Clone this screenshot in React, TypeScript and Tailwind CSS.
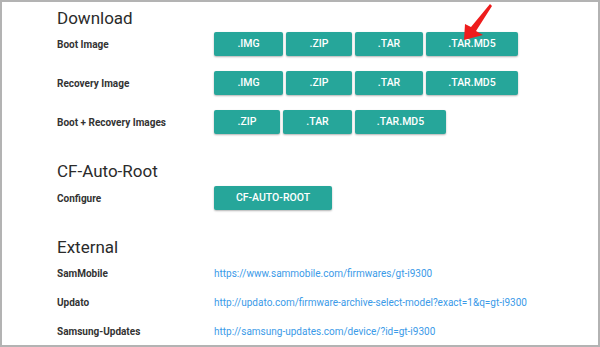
const downloadRows = [
  {
    label: "Boot Image",
    files: [
      { name: ".IMG", w: "w-[69px]" },
      { name: ".ZIP", w: "w-[66px]" },
      { name: ".TAR", w: "w-[68px]" },
      { name: ".TAR.MD5", w: "w-[92px]" },
    ],
  },
  {
    label: "Recovery Image",
    files: [
      { name: ".IMG", w: "w-[69px]" },
      { name: ".ZIP", w: "w-[66px]" },
      { name: ".TAR", w: "w-[68px]" },
      { name: ".TAR.MD5", w: "w-[92px]" },
    ],
  },
  {
    label: "Boot + Recovery Images",
    files: [
      { name: ".ZIP", w: "w-[66px]" },
      { name: ".TAR", w: "w-[69px]" },
      { name: ".TAR.MD5", w: "w-[91px]" },
    ],
  },
];

const externalLinks = [
  { label: "SamMobile", url: "https://www.sammobile.com/firmwares/gt-i9300" },
  { label: "Updato", url: "http://updato.com/firmware-archive-select-model?exact=1&q=gt-i9300" },
  { label: "Samsung-Updates", url: "http://samsung-updates.com/device/?id=gt-i9300" },
];

const Btn = ({ children, w }: { children: React.ReactNode; w: string }) => (
  <button
    className={`${w} h-[24px] rounded-[2px] bg-[#26a69a] text-white text-[10.5px] font-medium uppercase shadow-[0_1px_2px_rgba(0,0,0,0.3)] flex items-center justify-center`}
  >
    {children}
  </button>
);

const Heading = ({ children }: { children: React.ReactNode }) => (
  <h2 className="text-[17px] leading-[24px] font-normal text-[#2b2b2b] pt-[1px]">{children}</h2>
);

const Label = ({ children }: { children: React.ReactNode }) => (
  <div className="w-[157px] shrink-0 text-[10px] font-bold text-[#333]">{children}</div>
);

export default function App() {
  return (
    <div
      className="relative w-[600px] h-[347px] bg-white border-2 border-[#b3b3b3] overflow-hidden"
      style={{ fontFamily: "Roboto, 'Liberation Sans', sans-serif" }}
    >
      <div className="pl-[55px] pt-[3px]">
        <Heading>Download</Heading>
        <div className="flex flex-col gap-[15px] mt-[2px]">
          {downloadRows.map((row) => (
            <div key={row.label} className="flex items-center">
              <Label>{row.label}</Label>
              <div className="flex gap-[3px]">
                {row.files.map((f) => (
                  <Btn key={f.name} w={f.w}>
                    {f.name}
                  </Btn>
                ))}
              </div>
            </div>
          ))}
        </div>

        <div className="mt-[24px]">
          <Heading>CF-Auto-Root</Heading>
        </div>
        <div className="flex items-center mt-[3px]">
          <Label>Configure</Label>
          <Btn w="w-[118px]">CF-Auto-Root</Btn>
        </div>

        <div className="mt-[24px]">
          <Heading>External</Heading>
        </div>
        <div className="flex flex-col">
          {externalLinks.map((l) => (
            <div key={l.label} className="flex items-center h-[29px]">
              <Label>{l.label}</Label>
              <a className="text-[10px] text-[#3a9ae8]" href="#">
                {l.url}
              </a>
            </div>
          ))}
        </div>
      </div>

      {/* red arrow pointing at the boot .TAR.MD5 */}
      <svg className="absolute left-0 top-0 pointer-events-none" width="600" height="347">
        <polygon
          points="462,38 463,22 469,25 488,2 490,4 474,29 481,33"
          fill="#ee1c1c"
        />
      </svg>
    </div>
  );
}
